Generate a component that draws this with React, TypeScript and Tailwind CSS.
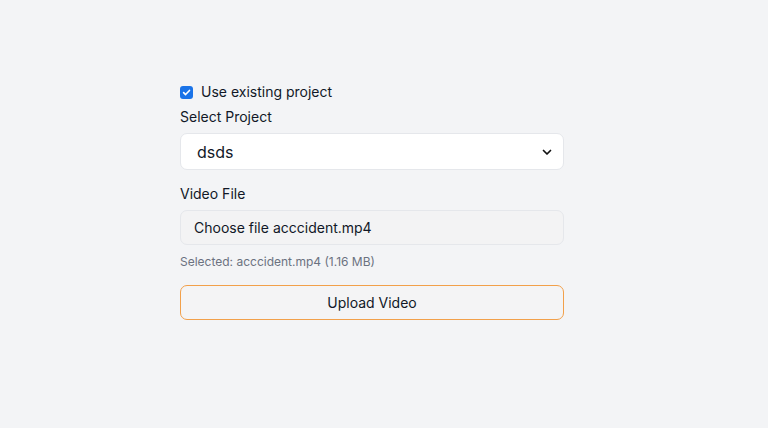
import React from "react";

export default function App() {
  return (
    <div className="min-h-[428px] w-full bg-[#f3f4f6] text-[#111827]" style={{ fontFamily: "Inter, 'Noto Sans', sans-serif" }}>
      <div className="pl-[180px] pt-[83px]">
        <div className="w-[384px] flex flex-col">
          <label className="flex items-center gap-[8px] h-[18px]">
            <span className="w-[13px] h-[13px] rounded-[3px] bg-[#1a73e8] flex items-center justify-center">
              <svg width="9" height="9" viewBox="0 0 10 10">
                <path d="M1.8 5.2 L4 7.3 L8.3 2.7" fill="none" stroke="white" strokeWidth="1.8" strokeLinecap="round" strokeLinejoin="round" />
              </svg>
            </span>
            <span className="text-[14px] leading-[18px]">Use existing project</span>
          </label>
          <div className="mt-[7px] text-[14px] leading-[18px]">Select Project</div>
          <div className="mt-[7px] h-[37px] rounded-[7px] border border-[#e5e7eb] bg-white flex items-center justify-between pl-[16px] pr-[11px]">
            <span className="text-[16px]">dsds</span>
            <svg width="10" height="10" viewBox="0 0 10 10">
              <path d="M1.5 3.5 L5 7 L8.5 3.5" fill="none" stroke="#111" strokeWidth="1.7" strokeLinecap="round" strokeLinejoin="round" />
            </svg>
          </div>
          <div className="mt-[15px] text-[14px] leading-[18px]">Video File</div>
          <div className="mt-[7px] h-[35px] rounded-[7px] border border-[#e5e7eb] bg-[#f3f3f4] flex items-center pl-[13px] text-[14px]">
            <span>Choose file</span>
            <span className="ml-[4px]">acccident.mp4</span>
          </div>
          <div className="mt-[9px] text-[12px] leading-[16px] text-[#6b7280]">Selected: acccident.mp4 (1.16 MB)</div>
          <button className="mt-[15px] h-[35px] rounded-[7px] border border-[#f2a04a] bg-[#f4f4f5] text-[14px] text-[#111827]">
            Upload Video
          </button>
        </div>
      </div>
    </div>
  );
}
